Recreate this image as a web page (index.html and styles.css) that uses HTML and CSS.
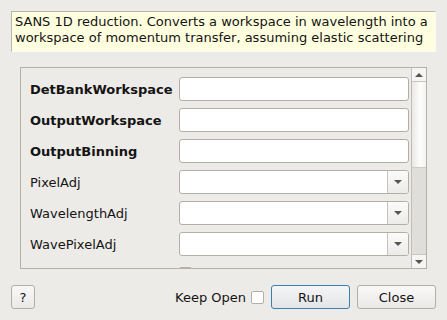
FILE: index.html
```html
<!DOCTYPE html>
<html lang="en">
<head>
    <meta charset="UTF-8">
    <title>Q1D</title>
    <link rel="stylesheet" href="styles.css">
</head>
<body>
    <div class="dialog">
        <!-- Description -->
        <div class="description">SANS 1D reduction. Converts a workspace in wavelength into a workspace of momentum transfer, assuming elastic scattering</div>

        <!-- Properties -->
        <div class="scroll-area">
            <div class="props">
                <label class="prop-label mandatory">DetBankWorkspace</label>
                <div class="field"><input class="text-input" type="text"></div>

                <label class="prop-label mandatory">OutputWorkspace</label>
                <div class="field"><input class="text-input" type="text"></div>

                <label class="prop-label mandatory">OutputBinning</label>
                <div class="field"><input class="text-input" type="text"></div>

                <label class="prop-label">PixelAdj</label>
                <div class="field combo"><span class="combo-text"></span><span class="combo-btn"><span class="arrow"></span></span></div>

                <label class="prop-label">WavelengthAdj</label>
                <div class="field combo"><span class="combo-text"></span><span class="combo-btn"><span class="arrow"></span></span></div>

                <label class="prop-label">WavePixelAdj</label>
                <div class="field combo"><span class="combo-text"></span><span class="combo-btn"><span class="arrow"></span></span></div>

                <!-- next row is scrolled out of view, only its checkbox peeks in -->
                <label class="prop-label"></label>
                <div class="field check-field"><span class="checkbox"></span></div>
            </div>
            <div class="scrollbar">
                <div class="sb-btn"><span class="sb-up"></span></div>
                <div class="sb-handle"></div>
                <div class="sb-track"></div>
                <div class="sb-btn sb-btn-bottom"><span class="sb-down"></span></div>
            </div>
        </div>

        <!-- Buttons -->
        <div class="button-row">
            <button class="btn help-btn">?</button>
            <div class="spacer"></div>
            <span class="keep-open">Keep Open</span>
            <span class="checkbox keep-check"></span>
            <button class="btn run-btn">Run</button>
            <button class="btn close-btn">Close</button>
        </div>
    </div>
</body>
</html>
```

FILE: styles.css
```css
/* General */
body {
    margin: 0;
    padding: 0;
    background: #edebe7;
    font-family: 'DejaVu Sans', sans-serif;
    font-size: 13px;
    color: #141414;
    overflow: hidden;
}
.dialog {
    width: 447px;
    height: 320px;
    padding: 11px 11px 0 11px;
    box-sizing: border-box;
}

/* Description */
.description {
    background: #ffffdf;
    border-top: 1px solid #b8b4ad;
    border-left: 1px solid #b8b4ad;
    border-right: 1px solid #fbfbf8;
    border-bottom: 1px solid #fbfbf8;
    padding: 2px 3px 3px 3px;
    line-height: 16px;
    height: 34px;
}

/* Scroll area */
.scroll-area {
    display: flex;
    margin: 15px 9px 0 9px;
    height: 202px;
    border: 1px solid #b5b1aa;
    box-sizing: border-box;
    overflow: hidden;
}
.props {
    flex: 1;
    display: grid;
    grid-template-columns: 149px 230px;
    grid-auto-rows: 24px;
    row-gap: 7px;
    padding: 9px 0 0 9px;
    align-items: center;
}
.prop-label {
    white-space: nowrap;
}
.mandatory {
    font-weight: bold;
}
.field {
    height: 24px;
    box-sizing: border-box;
    border: 1px solid #b3afa8;
    border-radius: 3px;
    background: #fff;
}
.text-input {
    width: 100%;
    height: 100%;
    border: none;
    background: transparent;
    padding: 0 4px;
    box-sizing: border-box;
    outline: none;
}
.combo {
    display: flex;
}
.combo-text {
    flex: 1;
}
.combo-btn {
    width: 20px;
    border-left: 1px solid #c6c2bc;
    background: linear-gradient(#fbfbfa, #ecebe8);
    display: flex;
    align-items: center;
    justify-content: center;
    border-radius: 0 2px 2px 0;
}
.arrow {
    width: 0;
    height: 0;
    border-left: 4px solid transparent;
    border-right: 4px solid transparent;
    border-top: 4px solid #555;
}
.check-field {
    border: none;
    background: transparent;
    display: flex;
    align-items: flex-start;
    padding-top: 4px;
}
.checkbox {
    display: inline-block;
    width: 13px;
    height: 13px;
    box-sizing: border-box;
    border: 1px solid #b3afa8;
    border-radius: 2px;
    background: #fff;
}

/* Scrollbar */
.scrollbar {
    width: 14px;
    border-left: 1px solid #c2beb7;
    display: flex;
    flex-direction: column;
}
.sb-btn {
    height: 14px;
    background: #f6f5f3;
    border-bottom: 1px solid #c8c4be;
    box-sizing: border-box;
    display: flex;
    align-items: center;
    justify-content: center;
}
.sb-btn-bottom {
    border-bottom: none;
    border-top: 1px solid #c8c4be;
}
.sb-up {
    width: 0;
    height: 0;
    border-left: 4px solid transparent;
    border-right: 4px solid transparent;
    border-bottom: 4px solid #555;
}
.sb-down {
    width: 0;
    height: 0;
    border-left: 4px solid transparent;
    border-right: 4px solid transparent;
    border-top: 4px solid #555;
}
.sb-handle {
    height: 86px;
    background: linear-gradient(to right, #e9e8e5, #fdfdfc 60%, #f3f2f0);
    border-bottom: 1px solid #cfcbc5;
    box-sizing: border-box;
}
.sb-track {
    flex: 1;
    background: #dfdedb;
}

/* Buttons */
.button-row {
    display: flex;
    align-items: center;
    margin-top: 16px;
    height: 24px;
}
.spacer {
    flex: 1;
}
.btn {
    font-family: 'DejaVu Sans', sans-serif;
    font-size: 13px;
    color: #141414;
    height: 24px;
    border: 1px solid #b3afa8;
    border-radius: 3px;
    background: linear-gradient(#f9f8f7, #ebe9e6);
    padding: 0;
}
.help-btn {
    width: 24px;
}
.keep-open {
    margin-right: 5px;
}
.keep-check {
    margin-right: 7px;
}
.run-btn {
    width: 79px;
    border-color: #3d7fb3;
    margin-right: 7px;
    background: linear-gradient(#f4f5f6, #e2e5e7);
}
.close-btn {
    width: 79px;
}
```
